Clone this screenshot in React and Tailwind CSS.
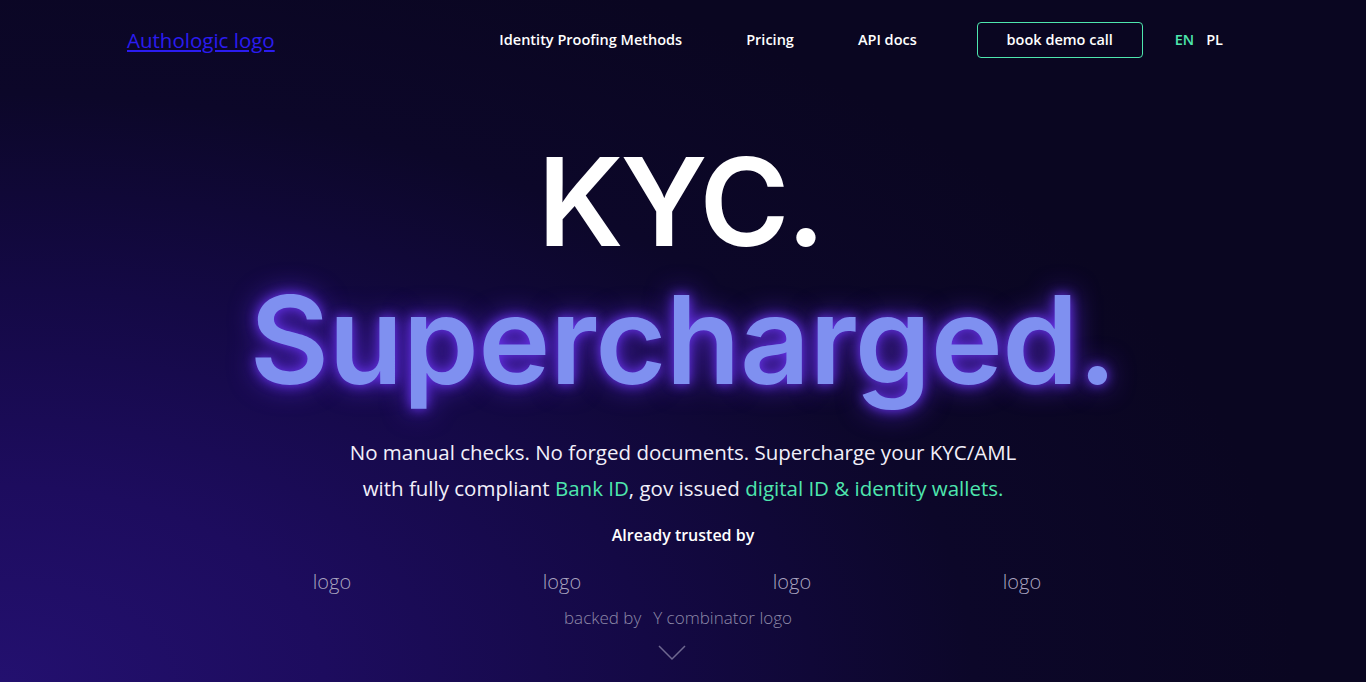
export default function App() {
  const font = { fontFamily: '"Open Sans", "Lato", sans-serif' };
  const head = { fontFamily: 'Inter, "Open Sans", sans-serif' };
  return (
    <div
      className="relative w-full h-[682px] overflow-hidden bg-[#0a0621] text-white"
      style={font}
    >
      <div className="absolute inset-0 bg-[radial-gradient(ellipse_95%_115%_at_0%_100%,#23106f_0%,#1d0c5e_25%,#140945_50%,#0c0729_75%,#0a0621_100%)]" />
      <div className="relative flex flex-col h-full">
        <nav className="flex items-center h-[80px] pl-[127px] pr-[143px]">
          <a href="#" className="text-[20.5px] text-[#2b1cf0] underline leading-none">
            Authologic logo
          </a>
          <div className="ml-auto flex items-center text-[14.5px] font-semibold">
            <span className="mr-[64px]">Identity Proofing Methods</span>
            <span className="mr-[64px]">Pricing</span>
            <span className="mr-[60px]">API docs</span>
            <button className="w-[166px] h-[36px] border border-[#4ee6ae] rounded-[4px] text-[14.5px] font-semibold mr-[32px]">
              book demo call
            </button>
            <span className="text-[#4ee6ae] mr-[12px]">EN</span>
            <span>PL</span>
          </div>
        </nav>
        <div className="flex flex-col items-center">
          <h1 style={head} className="mt-[54px] mr-[6px] text-[122px] leading-[136px] font-semibold tracking-[-3px]">KYC.</h1>
          <h2 style={head} className="text-[122px] leading-[140px] font-semibold text-[#7f90f0] tracking-[-0.5px] [text-shadow:0_0_12px_#6a35f0,0_0_28px_#5a28d8]">
            Supercharged.
          </h2>
          <p className="mt-[24px] text-[20.5px] leading-[36px] text-center text-[#f2f0fa]">
            No manual checks. No forged documents. Supercharge your KYC/AML
            <br />
            with fully compliant <span className="text-[#4ee6ae]">Bank ID</span>, gov issued{" "}
            <span className="text-[#4ee6ae]">digital ID &amp; identity wallets.</span>
          </p>
          <p className="mt-[17px] text-[16px] font-semibold">Already trusted by</p>
          <div className="mt-[20px] mr-[12px] grid grid-cols-4 w-[920px] text-[20px] font-light text-[#a8a3be] text-center">
            <span>logo</span>
            <span>logo</span>
            <span>logo</span>
            <span>logo</span>
          </div>
          <div className="mt-[8px] mr-[10px] flex gap-[12px] text-[17px] font-light text-[#8e89a8]">
            <span>backed by</span>
            <span>Y combinator logo</span>
          </div>
          <svg className="mt-[14px] mr-[22px]" width="28" height="16" viewBox="0 0 28 16" fill="none">
            <path d="M1 1 L14 14 L27 1" stroke="#6e6890" strokeWidth="1.5" />
          </svg>
        </div>
      </div>
    </div>
  );
}
